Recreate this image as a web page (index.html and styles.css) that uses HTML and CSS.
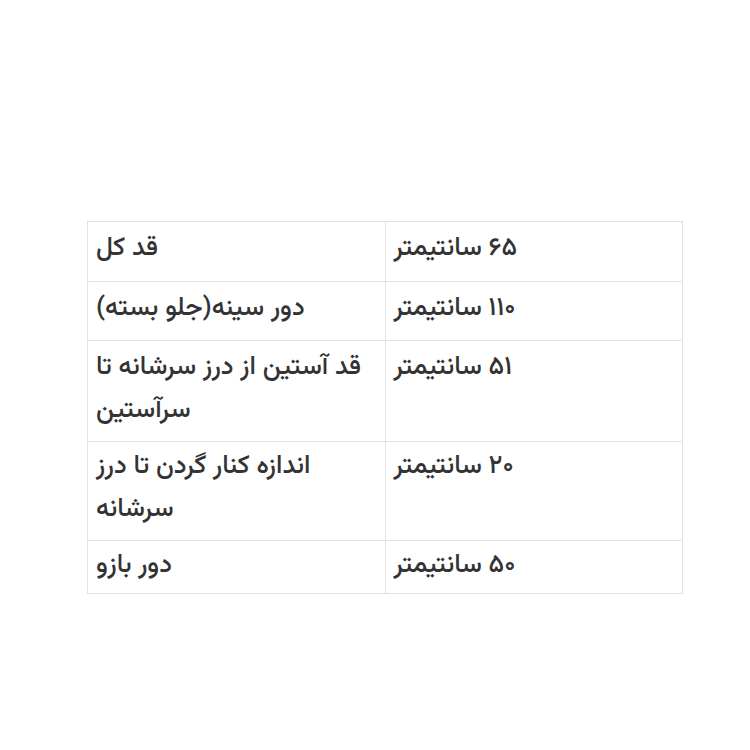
FILE: index.html
```html
<!DOCTYPE html>
<html lang="fa">
<head>
<meta charset="utf-8">
<link rel="stylesheet" href="styles.css">
</head>
<body>
<main class="page">
  <table class="size-table">
    <tbody>
      <tr class="first-row"><td dir="rtl">قد کل</td><td dir="rtl">۶۵ سانتیمتر</td></tr>
      <tr><td dir="rtl">دور سینه(جلو بسته)</td><td dir="rtl">۱۱۰ سانتیمتر</td></tr>
      <tr class="wrap-row"><td dir="rtl">قد آستین از درز سرشانه تا سرآستین</td><td dir="rtl">۵۱ سانتیمتر</td></tr>
      <tr class="wrap-row tight-row"><td dir="rtl">اندازه کنار گردن تا درز سرشانه</td><td dir="rtl">۲۰ سانتیمتر</td></tr>
      <tr class="last-row"><td dir="rtl">دور بازو</td><td dir="rtl">۵۰ سانتیمتر</td></tr>
    </tbody>
  </table>
</main>
</body>
</html>
```
FILE: styles.css
```css
html, body {
  margin: 0;
  padding: 0;
  background: #ffffff;
}
.page {
  padding: 221px 68px 0 87px;
}
.size-table {
  width: 596px;
  border-collapse: collapse;
  table-layout: fixed;
  font-family: "Vazirmatn", "Noto Sans Arabic", "DejaVu Sans", sans-serif;
  font-size: 26px;
  font-weight: 500;
  line-height: 43px;
  color: #333333;
}
.size-table td {
  border: 1px solid #e2e2e2;
  padding: 5px 8px 10px 8px;
  text-align: left;
  vertical-align: top;
  width: 50%;
}
.size-table .first-row td {
  padding-bottom: 11px;
}
.size-table .wrap-row td {
  padding-bottom: 9px;
}
.size-table .tight-row td {
  padding-top: 3px;
}
.size-table .last-row td {
  padding-top: 3px;
  padding-bottom: 6px;
}
```
